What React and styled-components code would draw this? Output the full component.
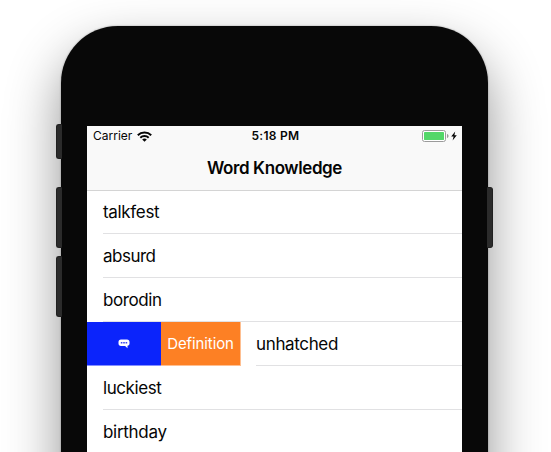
import React from "react";
import styled, { createGlobalStyle } from "styled-components";

const GlobalStyle = createGlobalStyle`
  * { box-sizing: border-box; }
  html, body { margin: 0; background: #fff; overflow: hidden; }
  body { font-family: Inter, "Liberation Sans", sans-serif; color: #050505; }
`;

const Stage = styled.main`
  display: flex;
  width: 551px;
  height: 452px;
  padding: 26px 0 0 56px;
  overflow: hidden;
`;

const Rail = styled.div`
  display: flex;
  flex-direction: column;
  width: 6px;
  z-index: 1;
  padding-top: ${(p) => p.$top}px;
  margin-${(p) => p.$side}: -1px;
`;

const SideButton = styled.span`
  height: ${(p) => p.$height}px;
  margin-top: ${(p) => p.$gap || 0}px;
  background: #2b2b2b;
  border: 1px solid #202020;
  border-${(p) => p.$inner}: 0;
  border-radius: ${(p) => (p.$inner === "right" ? "3px 0 0 3px" : "0 3px 3px 0")};
`;

const Phone = styled.section`
  width: 427px;
  height: 830px;
  flex: none;
  padding: 100px 26px 0;
  background: #080808;
  border-radius: 57px;
  box-shadow: 0 0 2px rgba(0, 0, 0, 0.35), 0 25px 54px rgba(0, 0, 0, 0.43);
`;

const Screen = styled.div`
  height: 667px;
  background: #fff;
  overflow: hidden;
`;

const Header = styled.header`
  height: 65px;
  background: #f9f9f9;
  border-bottom: 1px solid #d4d4d4;
`;

const StatusBar = styled.div`
  display: grid;
  grid-template-columns: 1fr auto 1fr;
  align-items: center;
  height: 20px;
  padding: 0 4px 0 6px;
  font-size: 12px;
  line-height: 20px;
`;

const Carrier = styled.div`
  display: flex;
  align-items: center;
  gap: 5px;
  letter-spacing: 0;
`;

const Clock = styled.time`
  font-weight: 600;
  letter-spacing: 0.28px;
`;

const Power = styled.div`
  display: flex;
  justify-content: flex-end;
  align-items: center;
  gap: 1px;
`;

const Title = styled.h1`
  margin: 0;
  height: 44px;
  font-size: 17px;
  font-weight: 600;
  line-height: 44px;
  letter-spacing: -0.4px;
  text-align: center;
`;

const List = styled.div`
  margin-top: -1px;
`;

const Row = styled.div`
  display: flex;
  height: 44px;
`;

const Word = styled.div`
  flex: 1;
  margin-left: 16px;
  border-bottom: 1px solid #e1e1e3;
  font-size: 17px;
  line-height: 44px;
  letter-spacing: ${(p) => p.$tracking}px;
`;

const Action = styled.button`
  display: flex;
  align-items: center;
  justify-content: center;
  width: ${(p) => p.$width}px;
  height: 44px;
  padding: 0;
  border: 0;
  border-bottom: 1px solid ${(p) => p.$edge};
  background: ${(p) => p.$color};
  color: #fff;
  font: 400 15px/44px Inter, sans-serif;
  letter-spacing: -0.1px;
`;

const LastAction = styled(Action)`
  border-right: 1px solid ${(p) => p.$edge};
  margin-right: -1px;
`;

const Icon = styled.svg`
  display: block;
  flex: none;
`;

const WifiIcon = () => (
  <Icon width="15" height="11" viewBox="0 0 15 11" fill="none" stroke="#050505" strokeWidth="2">
    <path d="M.8 4.2C4.4.7 10.6.7 14.2 4.2" />
    <path d="M3.3 6.7c2.3-2.2 6.1-2.2 8.4 0" />
    <path d="M5.2 8.5c1.3-1.2 3.3-1.2 4.6 0L7.5 10.7z" fill="#050505" stroke="none" />
  </Icon>
);

const BatteryIcon = () => (
  <Icon width="27" height="12" viewBox="0 0 27 12">
    <rect x=".5" y=".5" width="23" height="11" rx="2" fill="#fff" stroke="#9b9b9b" />
    <rect x="2" y="2" width="20" height="8" rx=".4" fill="#53d769" />
    <path d="M25 4c2 .6 2 3.4 0 4z" fill="#999" />
  </Icon>
);

const BoltIcon = () => (
  <Icon width="8" height="10" viewBox="0 0 8 10">
    <path d="M5.2.4 1.2 5.6h2.4L2.6 9.6 6.8 4.2H4.4z" fill="#050505" />
  </Icon>
);

const ChatIcon = () => (
  <Icon width="12" height="10" viewBox="0 0 12 10">
    <path d="M3 .6h6c1.6 0 2.5.9 2.5 2.4v1.5c0 1.4-.7 2.1-2 2.3v2.5L7.1 6.9H3C1.4 6.9.5 6 .5 4.5V3C.5 1.5 1.4.6 3 .6z" fill="#fff" />
    <path d="M2.8 3h1.6v1.5H2.8zm2.4 0h1.6v1.5H5.2zm2.4 0h1.6v1.5H7.6z" fill="#3947ef" />
  </Icon>
);

const words = [
  { text: "talkfest", tracking: -0.32 },
  { text: "absurd", tracking: -0.5 },
  { text: "borodin", tracking: -0.4 },
  { text: "unhatched", tracking: -0.36, swiped: true },
  { text: "luckiest", tracking: -0.42 },
  { text: "birthday", tracking: -0.3 },
];

export default function App() {
  return (
    <>
      <GlobalStyle />
      <Stage>
        <Rail $top={98} $side="right">
          <SideButton $height={35} $inner="right" />
          <SideButton $height={61} $gap={28} $inner="right" />
          <SideButton $height={61} $gap={8} $inner="right" />
        </Rail>
        <Phone>
          <Screen>
            <Header>
              <StatusBar>
                <Carrier>Carrier<WifiIcon /></Carrier>
                <Clock>5:18 PM</Clock>
                <Power><BatteryIcon /><BoltIcon /></Power>
              </StatusBar>
              <Title>Word Knowledge</Title>
            </Header>
            <List>
              {words.map(({ text, tracking, swiped }) => (
                <Row key={text}>
                  {swiped && (
                    <>
                      <Action $width={74} $color="#0b24fb" $edge="#858fff" aria-label="Speak"><ChatIcon /></Action>
                      <LastAction $width={80} $color="#fd8024" $edge="#febf91">Definition</LastAction>
                    </>
                  )}
                  <Word $tracking={tracking}>{text}</Word>
                </Row>
              ))}
            </List>
          </Screen>
        </Phone>
        <Rail $top={161} $side="left">
          <SideButton $height={61} $inner="left" />
        </Rail>
      </Stage>
    </>
  );
}
